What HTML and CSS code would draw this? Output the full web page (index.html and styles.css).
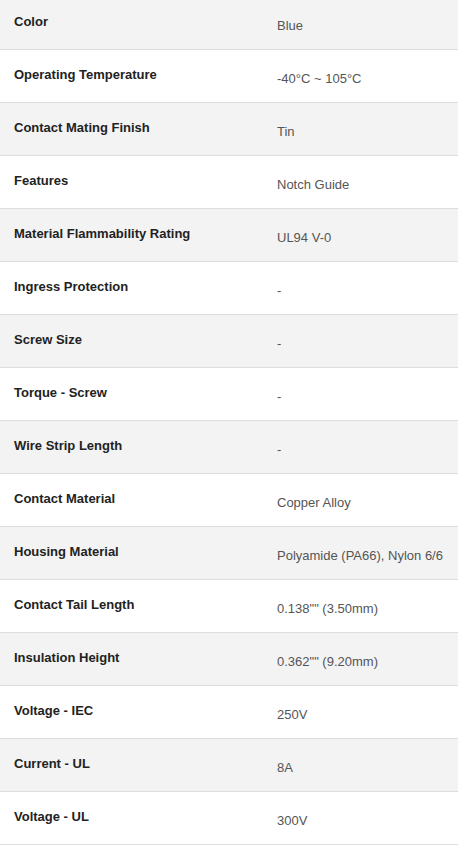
FILE: index.html
```html
<!DOCTYPE html>
<html>
<head>
<meta charset="utf-8">
<link rel="stylesheet" href="styles.css">
</head>
<body>
<div class="specs">
  <div class="row odd"><div class="label">Color</div><div class="value">Blue</div></div>
  <div class="row"><div class="label">Operating Temperature</div><div class="value">-40°C ~ 105°C</div></div>
  <div class="row odd"><div class="label">Contact Mating Finish</div><div class="value">Tin</div></div>
  <div class="row"><div class="label">Features</div><div class="value">Notch Guide</div></div>
  <div class="row odd"><div class="label">Material Flammability Rating</div><div class="value">UL94 V-0</div></div>
  <div class="row"><div class="label">Ingress Protection</div><div class="value">-</div></div>
  <div class="row odd"><div class="label">Screw Size</div><div class="value">-</div></div>
  <div class="row"><div class="label">Torque - Screw</div><div class="value">-</div></div>
  <div class="row odd"><div class="label">Wire Strip Length</div><div class="value">-</div></div>
  <div class="row"><div class="label">Contact Material</div><div class="value">Copper Alloy</div></div>
  <div class="row odd"><div class="label">Housing Material</div><div class="value">Polyamide (PA66), Nylon 6/6</div></div>
  <div class="row"><div class="label">Contact Tail Length</div><div class="value">0.138"" (3.50mm)</div></div>
  <div class="row odd"><div class="label">Insulation Height</div><div class="value">0.362"" (9.20mm)</div></div>
  <div class="row"><div class="label">Voltage - IEC</div><div class="value">250V</div></div>
  <div class="row odd"><div class="label">Current - UL</div><div class="value">8A</div></div>
  <div class="row"><div class="label">Voltage - UL</div><div class="value">300V</div></div>
</div>
</body>
</html>
```

FILE: styles.css
```css
html, body {
  margin: 0;
  padding: 0;
  background: #fff;
}
body {
  font-family: "Liberation Sans", Arial, sans-serif;
  font-size: 13px;
}
.specs {
  margin-top: -3px;
}
.row {
  display: grid;
  grid-template-columns: 263px 1fr;
  height: 52px;
  border-bottom: 1px solid #dddddd;
  background: #fff;
}
.row.odd {
  background: #f3f3f3;
}
.label {
  padding: 15px 14px 0 14px;
  line-height: 19px;
  font-weight: bold;
  color: #222;
}
.value {
  padding: 19px 14px 0 14px;
  line-height: 19px;
  color: #555;
}
```
